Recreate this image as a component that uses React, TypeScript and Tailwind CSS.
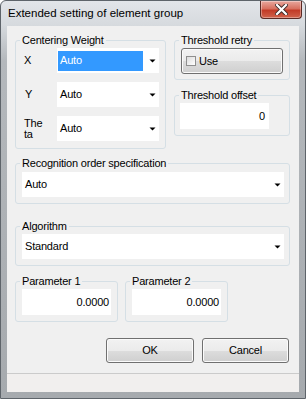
import React from "react";

function Arrow() {
  return (
    <svg width="7" height="4" viewBox="0 0 7 4" className="block">
      <polygon points="0.5,0.5 6.5,0.5 3.5,3.5" fill="#000" />
    </svg>
  );
}

function Combo({ value, selected, className = "" }: { value: string; selected?: boolean; className?: string }) {
  return (
    <div className={`h-[25px] bg-white flex items-center ${className}`}>
      {selected ? (
        <div className="ml-[1px] h-[20px] w-[85px] bg-[#3399ff] text-white flex items-center pl-[2px]">{value}</div>
      ) : (
        <span className="pl-[3px]">{value}</span>
      )}
      <span className="ml-auto mr-[3px]">
        <Arrow />
      </span>
    </div>
  );
}

function Group({ label, className = "", children }: { label: string; className?: string; children: React.ReactNode }) {
  return (
    <fieldset className={`border border-[#d5dfe5] rounded-[3px] p-0 m-0 min-w-0 ${className}`}>
      <legend className="ml-[4px] px-[2px] text-[11px] leading-[15px] tracking-[-0.2px]">{label}</legend>
      {children}
    </fieldset>
  );
}

function Btn({ children, className = "" }: { children: React.ReactNode; className?: string }) {
  return (
    <div
      className={`h-[25px] rounded-[3px] border border-[#707070] bg-[linear-gradient(to_bottom,#f2f2f2_0%,#ebebeb_50%,#dddddd_50%,#cfcfcf_100%)] shadow-[inset_0_0_0_1px_#fbfbfb] flex items-center justify-center ${className}`}
    >
      {children}
    </div>
  );
}

export default function App() {
  return (
    <div className="w-[306px] h-[399px] font-['Liberation_Sans',Arial,sans-serif] text-[11px] text-black tracking-[-0.2px] rounded-t-[6px] border border-[#5e646a] bg-[linear-gradient(to_bottom,#e2e5e9_0px,#d6dade_24px,#b4b8bc_60px,#a6aaae_100%)] flex flex-col">
      {/* Title bar */}
      <div className="h-[25px] flex items-start shrink-0">
        <span className="ml-[7px] mt-[5px] text-[11.5px] leading-[15px] tracking-[0px]">Extended setting of element group</span>
        <div className="ml-auto mr-[3px] w-[42px] h-[18px] rounded-b-[4px] border border-t-0 border-[#5b2a24] bg-[linear-gradient(to_bottom,#e8a89e_0%,#d7705f_45%,#c23b27_55%,#d0634c_100%)] shadow-[inset_0_0_0_1px_rgba(255,255,255,0.35)] flex items-center justify-center">
          <svg width="13" height="11" viewBox="0 0 13 11">
            <path d="M2 1 L11 10 M11 1 L2 10" stroke="#3b2a28" strokeWidth="4" strokeLinecap="square" />
            <path d="M2 1 L11 10 M11 1 L2 10" stroke="#ffffff" strokeWidth="2.2" strokeLinecap="square" />
          </svg>
        </div>
      </div>

      {/* Client */}
      <div className="flex-1 mx-[6px] mb-[6px] bg-[#f0f0f0] flex flex-col">
        <div className="flex-1 flex flex-col pl-[8px] pr-[9px] pt-[7px]">
          {/* Row 1 */}
          <div className="flex gap-[8px]">
            <Group label="Centering Weight" className="w-[151px]">
              <div className="flex flex-col gap-[9px] pl-[8px] pr-[6px] pb-[7px]">
                <div className="flex items-center">
                  <span className="w-[33px]">X</span>
                  <Combo value="Auto" selected className="w-[102px]" />
                </div>
                <div className="flex items-center">
                  <span className="w-[33px] pl-[1px]">Y</span>
                  <Combo value="Auto" className="w-[102px]" />
                </div>
                <div className="flex items-center">
                  <span className="w-[33px] leading-[11px]">
                    The
                    <br />
                    ta
                  </span>
                  <Combo value="Auto" className="w-[102px]" />
                </div>
              </div>
            </Group>

            <div className="flex flex-col w-[116px]">
              <Group label="Threshold retry">
                <div className="pl-[6px] pr-[6px] pb-[5px]">
                  <Btn className="w-[102px] h-[26px] justify-start">
                    <div className="ml-[4px] w-[10px] h-[10px] border border-[#8f8f8f] bg-[linear-gradient(to_bottom_right,#dcdcdc,#ffffff)]" />
                    <span className="ml-[3px]">Use</span>
                  </Btn>
                </div>
              </Group>
              <Group label="Threshold offset" className="mt-[8px]">
                <div className="pl-[5px] pb-[6px]">
                  <div className="w-[89px] h-[26px] bg-white flex items-center justify-end pr-[4px]">0</div>
                </div>
              </Group>
            </div>
          </div>

          {/* Recognition order */}
          <Group label="Recognition order specification" className="mt-[7px]">
            <div className="pl-[6px] pr-[5px] pt-[1px] pb-[6px]">
              <Combo value="Auto" className="w-full" />
            </div>
          </Group>

          {/* Algorithm */}
          <Group label="Algorithm" className="mt-[15px]">
            <div className="pl-[6px] pr-[5px] pb-[6px]">
              <Combo value="Standard" className="w-full" />
            </div>
          </Group>

          {/* Parameters */}
          <div className="flex gap-[7px] mt-[8px]">
            <Group label="Parameter 1" className="w-[103px]">
              <div className="pl-[6px] pr-[6px] pb-[6px]">
                <div className="h-[26px] bg-white flex items-center justify-end pr-[2px]">0.0000</div>
              </div>
            </Group>
            <Group label="Parameter 2" className="w-[103px]">
              <div className="pl-[6px] pr-[6px] pb-[6px]">
                <div className="h-[26px] bg-white flex items-center justify-end pr-[2px]">0.0000</div>
              </div>
            </Group>
          </div>

          {/* Buttons */}
          <div className="flex justify-end gap-[8px] mt-[16px] mr-[1px]">
            <Btn className="w-[88px]">OK</Btn>
            <Btn className="w-[87px]">Cancel</Btn>
          </div>
        </div>

        {/* Status bar */}
        <div className="h-[19px] shrink-0 border-t border-[#cbcbcb] bg-[#f1efee]" />
      </div>
    </div>
  );
}
